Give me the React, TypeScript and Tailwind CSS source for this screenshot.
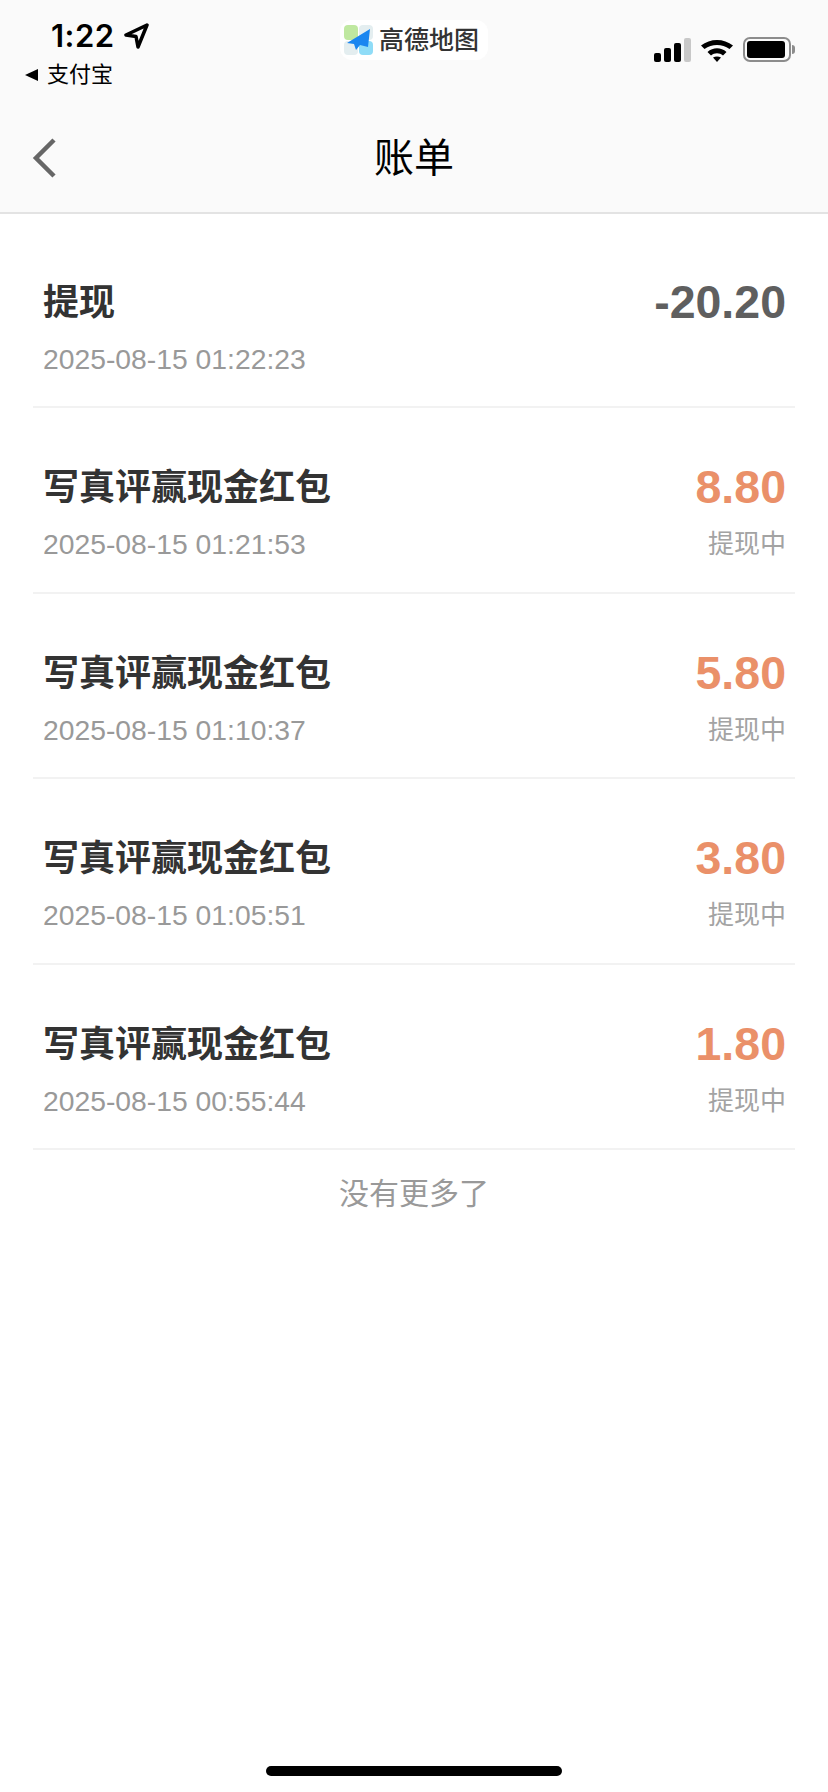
const rows = [
  { title: "提现", time: "2025-08-15 01:22:23", amount: "-20.20", out: true },
  { title: "写真评赢现金红包", time: "2025-08-15 01:21:53", amount: "8.80" },
  { title: "写真评赢现金红包", time: "2025-08-15 01:10:37", amount: "5.80" },
  { title: "写真评赢现金红包", time: "2025-08-15 01:05:51", amount: "3.80" },
  { title: "写真评赢现金红包", time: "2025-08-15 00:55:44", amount: "1.80" },
];

const cjk = "font-['Liberation_Sans','Noto_Sans_CJK_SC',sans-serif]";

const StatusBar = () => (
  <div className="flex h-[104px] items-start px-[33px]">
    <div className="flex flex-1 flex-col">
      <div className="ml-[18px] mt-[17px] flex items-center gap-[8px]">
        <span className="font-['Inter',sans-serif] text-[31px] leading-[38px] font-semibold tracking-[0.5px] text-black">1:22</span>
        <svg width="26" height="26" viewBox="0 0 26 26" fill="none" stroke="#000" strokeWidth="3.500" strokeLinejoin="round">
          <path d="M24 2 3 12l10 1.500L15 24z" />
        </svg>
      </div>
      <div className="-ml-[9px] mt-[7px] flex items-center gap-[9px]">
        <svg width="14" height="14" viewBox="0 0 14 14" fill="#000"><path d="M1 7 14 1v12z" /></svg>
        <span className={`${cjk} text-[22px] leading-[26px] text-black`}>支付宝</span>
      </div>
    </div>
    <div className="mt-[20px] flex h-[40px] w-[148px] items-center gap-[5px] rounded-[12px] bg-white pl-[4px]">
      <svg width="30" height="30" viewBox="0 0 30 30">
        <rect x="0" y="0" width="14" height="15" rx="4" fill="#bfe8a0" />
        <rect x="15" y="0" width="14" height="15" rx="4" fill="#e4eef0" />
        <rect x="0" y="16" width="14" height="14" rx="4" fill="#e4eef0" />
        <rect x="15" y="16" width="14" height="14" rx="4" fill="#8fdcf7" />
        <path d="M26 4 3 18l7 1 2 6 4-5 8 2z" fill="#1a86f0" />
      </svg>
      <span className={`${cjk} text-[25px] leading-[30px] font-medium text-[#333]`}>高德地图</span>
    </div>
    <div className="mt-[37px] flex flex-1 items-center justify-end gap-[10px]">
      <svg width="37" height="24" viewBox="0 0 37 24">
        <rect x="0" y="15" width="7" height="9" rx="2" fill="#000" />
        <rect x="10" y="10" width="7" height="14" rx="2" fill="#000" />
        <rect x="20" y="5" width="7" height="19" rx="2" fill="#000" />
        <rect x="30" y="0" width="7" height="24" rx="2" fill="#c8c8c8" />
      </svg>
      <svg width="32" height="24" viewBox="0 0 32 24">
        <path d="M0 7.500C9 0 23 0 32 7.500l-3.500 3.500C21 5.500 11 5.500 3.500 11z" fill="#000" />
        <path d="M6.500 14c5.500-5 13.500-5 19 0l-3.500 3.500c-3.500-3-8.500-3-12 0z" fill="#000" />
        <path d="M12 19.500c2.500-1.500 5.500-1.500 8 0L16 24z" fill="#000" />
      </svg>
      <div className="flex items-center gap-[1px]">
        <div className="flex h-[25px] w-[48px] items-center rounded-[7px] border-[2px] border-[#8c8c8c] p-[2px]">
          <div className="h-full w-[38px] rounded-[3px] bg-black" />
        </div>
        <div className="h-[9px] w-[3px] rounded-r-full bg-[#8c8c8c]" />
      </div>
    </div>
  </div>
);

const App = () => {
  return (
    <div className="flex min-h-[1792px] w-[828px] flex-col bg-white">
      <header className="h-[214px] border-b-[2px] border-[#e3e3e3] bg-[#fafafa]">
        <StatusBar />
        <div className="relative flex h-[108px] items-center justify-center">
          <svg className="absolute left-[30px] top-[33px]" width="30" height="42" viewBox="0 0 30 42" fill="none" stroke="#666" strokeWidth="4.500">
            <path d="M24 3 6 21l18 18" />
          </svg>
          <h1 className={`${cjk} text-[40px] leading-[52px] font-normal text-black`}>账单</h1>
        </div>
      </header>
      <main className="pt-[9px]">
        {rows.map((r) => (
          <div key={r.time} className="mx-[33px] flex h-[185.4px] justify-between border-b-[2px] border-[#f2f2f2] pl-[10px] pr-[9px] pt-[55px]">
            <div className="flex flex-col">
              <span className={`${cjk} text-[36px] leading-[50px] font-semibold text-[#333]`}>{r.title}</span>
              <span className="mt-[13px] font-['Liberation_Sans',sans-serif] text-[28.3px] leading-[36px] text-[#999]">{r.time}</span>
            </div>
            <div className="-mt-[3px] flex flex-col items-end">
              <span className={`font-['Liberation_Sans',sans-serif] text-[46.5px] leading-[54px] font-bold ${r.out ? "text-[#5f5f5f]" : "text-[#ea9069]"}`}>{r.amount}</span>
              {!r.out && <span className={`${cjk} mt-[12px] text-[26px] leading-[36px] text-[#a3a3a3]`}>提现中</span>}
            </div>
          </div>
        ))}
        <p className={`${cjk} mt-[24px] text-center text-[30px] leading-[40px] text-[#999]`}>没有更多了</p>
      </main>
      <div className="mt-auto mb-[16px] flex justify-center">
        <div className="h-[10px] w-[296px] rounded-full bg-black" />
      </div>
    </div>
  );
};

export default App;
